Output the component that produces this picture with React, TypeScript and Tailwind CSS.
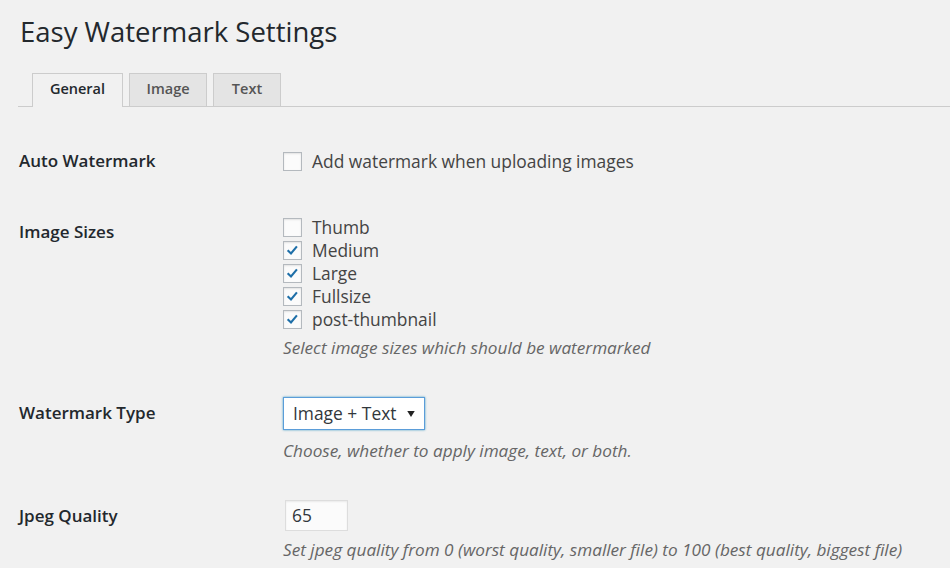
import React from "react";

const font = { fontFamily: '"Open Sans", "Noto Sans", sans-serif' };

function Check({ checked }: { checked?: boolean }) {
  return (
    <span className="w-[19px] h-[19px] border border-[#b4b9be] bg-[#fbfbfb] shadow-[inset_0_1px_2px_rgba(0,0,0,0.1)] flex items-center justify-center shrink-0">
      {checked && (
        <svg viewBox="0 0 20 20" className="w-[15px] h-[15px]">
          <path d="M4.5 10.5 L8 14 L15 5.5" fill="none" stroke="#1e6fa8" strokeWidth="2.8" strokeLinecap="square" strokeLinejoin="miter" />
        </svg>
      )}
    </span>
  );
}

function Row({ label, labelTop, children }: { label: string; labelTop: string; children: React.ReactNode }) {
  return (
    <div className="flex">
      <div className={`w-[264px] shrink-0 font-semibold text-[17px] leading-[22px] text-[#23282d] ${labelTop}`}>{label}</div>
      <div className="flex-1">{children}</div>
    </div>
  );
}

export default function App() {
  const sizes = [
    { name: "Thumb", on: false },
    { name: "Medium", on: true },
    { name: "Large", on: true },
    { name: "Fullsize", on: true },
    { name: "post-thumbnail", on: true },
  ];

  return (
    <div className="w-[950px] h-[568px] bg-[#f1f1f1] overflow-hidden text-[#444]" style={font}>
      <h1 className="pl-[20px] pt-[14px] text-[27.5px] leading-[36px] font-normal text-[#23282d]">Easy Watermark Settings</h1>

      {/* Tabs */}
      <div className="ml-[18px] mt-[23px] flex items-end gap-[6px] border-b border-[#ccc] pl-[14px] h-[34px]">
        <div className="h-[34px] w-[91px] border border-[#ccc] border-b-0 bg-[#f1f1f1] -mb-px flex items-center justify-center pb-[3px] text-[14.5px] font-semibold text-[#23282d]">General</div>
        <div className="h-[33px] w-[78px] border border-[#ccc] border-b-0 bg-[#e4e4e4] flex items-center justify-center pb-[3px] text-[14.5px] font-semibold text-[#555]">Image</div>
        <div className="h-[33px] w-[68px] border border-[#ccc] border-b-0 bg-[#e4e4e4] flex items-center justify-center pb-[3px] text-[14.5px] font-semibold text-[#555]">Text</div>
      </div>

      <div className="pl-[19px]">
        {/* Auto watermark */}
        <div className="mt-[44px]">
          <Row label="Auto Watermark" labelTop="-mt-[1px]">
            <label className="flex items-center gap-[10px] text-[17.4px] leading-[20px]">
              <Check />
              <span>Add watermark when uploading images</span>
            </label>
          </Row>
        </div>

        {/* Image sizes */}
        <div className="mt-[46px]">
          <Row label="Image Sizes" labelTop="pt-[3px]">
            <div className="flex flex-col gap-[4px]">
              {sizes.map((s) => (
                <label key={s.name} className="flex items-center gap-[10px] text-[17.4px] leading-[19px]">
                  <Check checked={s.on} />
                  <span>{s.name}</span>
                </label>
              ))}
            </div>
            <p className="mt-[9px] text-[17.2px] italic text-[#666] leading-[20px]">Select image sizes which should be watermarked</p>
          </Row>
        </div>

        {/* Watermark type */}
        <div className="mt-[39px]">
          <Row label="Watermark Type" labelTop="pt-[5px]">
            <div className="w-[142px] h-[33px] bg-white border border-[#5b9dd9] shadow-[0_0_2px_rgba(30,140,190,0.8)] flex items-center justify-between pl-[9px] pr-[9px] text-[17.4px] text-[#32373c]">
              <span>Image + Text</span>
              <svg viewBox="0 0 10 8" className="w-[8px] h-[6px]"><path d="M0 0 H10 L5 8 Z" fill="#222" /></svg>
            </div>
            <p className="mt-[11px] text-[17.2px] italic text-[#666] leading-[20px]">Choose, whether to apply image, text, or both.</p>
          </Row>
        </div>

        {/* Jpeg quality */}
        <div className="mt-[39px]">
          <Row label="Jpeg Quality" labelTop="pt-[5px]">
            <div className="ml-[2px] w-[63px] h-[31px] bg-[#fbfbfb] border border-[#ddd] shadow-[inset_0_1px_2px_rgba(0,0,0,0.07)] flex items-center pl-[6px] text-[17.4px] text-[#32373c]">65</div>
            <p className="mt-[9px] text-[17.2px] italic text-[#666] leading-[20px]">Set jpeg quality from 0 (worst quality, smaller file) to 100 (best quality, biggest file)</p>
          </Row>
        </div>
      </div>
    </div>
  );
}
